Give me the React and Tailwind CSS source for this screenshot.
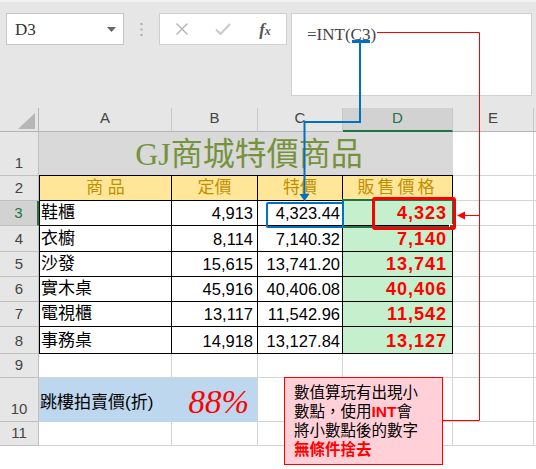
import React from 'react';

const G = 'border-r border-b border-[#d4d4d4]';
const K = 'border-r border-b border-black';
const RH = 'bg-[#e6e6e6] border-r border-b border-[#c0c0c0] flex items-end justify-center text-[15px] leading-none text-[#444] pb-[5px]';
const SERIF = "font-['Liberation_Serif','Noto_Sans_CJK_TC',serif]";

const data = [
  ['鞋櫃', '4,913', '4,323.44', '4,323'],
  ['衣櫥', '8,114', '7,140.32', '7,140'],
  ['沙發', '15,615', '13,741.20', '13,741'],
  ['實木桌', '45,916', '40,406.08', '40,406'],
  ['電視櫃', '13,117', '11,542.96', '11,542'],
  ['事務桌', '14,918', '13,127.84', '13,127'],
];

function Toolbar() {
  return (
    <div className="h-[108px] bg-[#e6e6e6] border-t-2 border-[#f2f2f2] flex items-start pt-[11px] pl-[6px]">
      <div className="w-[118px] h-[32px] bg-white border border-[#c6c6c6] flex items-center justify-between pl-[8px] pr-[7px]">
        <span className={`${SERIF} text-[17px] text-[#333] leading-none`}>D3</span>
        <svg width="9" height="5" viewBox="0 0 9 5"><path d="M0 0H9L4.5 5Z" fill="#666" /></svg>
      </div>
      <div className="w-[35px] h-[32px] flex items-center justify-center">
        <svg width="3" height="13" viewBox="0 0 3 13">
          <rect x="0.5" y="0" width="2" height="2" fill="#aaa" />
          <rect x="0.5" y="5.5" width="2" height="2" fill="#aaa" />
          <rect x="0.5" y="11" width="2" height="2" fill="#aaa" />
        </svg>
      </div>
      <div className="w-[128px] h-[32px] bg-white border border-[#d0d0d0] flex items-center">
        <div className="w-[42px] flex justify-center pl-[2px]">
          <svg width="14" height="12" viewBox="0 0 14 12"><path d="M1.5 0.5L12.5 11.5M12.5 0.5L1.5 11.5" stroke="#b4b4b4" strokeWidth="1.4" fill="none" /></svg>
        </div>
        <div className="w-[42px] flex justify-center">
          <svg width="16" height="12" viewBox="0 0 16 12"><path d="M1 6.5L5.5 11L15 1" stroke="#cccccc" strokeWidth="2.2" fill="none" /></svg>
        </div>
        <div className="w-[42px] flex justify-center">
          <span className={`${SERIF} italic font-bold text-[17px] text-[#555] leading-none`}>f<span className="text-[12px]">x</span></span>
        </div>
      </div>
      <div className="ml-[4px] w-[241px] h-[83px] bg-white border border-[#d0d0d0] pl-[15px] pt-[9px]">
        <span className={`${SERIF} text-[17px] text-[#444] leading-none`}>=INT(C3)</span>
      </div>
    </div>
  );
}

function Sheet() {
  const cells = [];
  cells.push(
    <div key="corner" className="bg-[#e6e6e6] border-r border-b border-[#b4b4b4] relative">
      <svg className="absolute left-[18px] top-[5px]" width="17" height="16" viewBox="0 0 17 16"><path d="M17 0V16H0Z" fill="#b6b6b6" /></svg>
    </div>
  );
  ['A', 'B', 'C'].forEach((l) =>
    cells.push(
      <div key={'h' + l} className="bg-[#e6e6e6] border-r border-b border-r-[#c8c8c8] border-b-[#b4b4b4] flex items-center justify-center text-[15px] text-[#444] pb-[3px]">{l}</div>
    )
  );
  cells.push(
    <div key="hD" className="bg-[#d2d2d2] border-r border-r-[#c8c8c8] border-b-2 border-b-[#217346] flex items-center justify-center text-[15px] text-[#217346] pb-[2px]">D</div>
  );
  cells.push(
    <div key="hE" className="bg-[#e6e6e6] border-r border-b border-r-[#c8c8c8] border-b-[#b4b4b4] flex items-center justify-center text-[15px] text-[#444] pb-[3px]">E</div>
  );
  cells.push(<div key="hX" className="bg-[#e6e6e6] border-b border-[#b4b4b4]" />);

  cells.push(<div key="r1" className={RH}>1</div>);
  cells.push(
    <div key="t" className={`col-span-4 bg-[#d9d9d9] border-b border-black flex items-end justify-center pb-[2px] ${SERIF} text-[32px] leading-[38px] text-[#76923c] pl-[6px]`}>GJ商城特價商品</div>
  );
  cells.push(<div key="e1" className={G} />);
  cells.push(<div key="x1" className="border-b border-[#d4d4d4]" />);

  cells.push(<div key="r2" className={RH}>2</div>);
  [['商 品', ''], ['定價', ''], ['特價', ''], ['販售價格', 'tracking-[3px]']].forEach(([t, c], i) =>
    cells.push(
      <div key={'y' + i} className={`${K} ${i === 0 ? 'border-l border-l-black' : ''} bg-[#ffe699] flex items-end justify-center text-[17px] leading-[22px] text-[#bf8f00] pb-[1px] ${c}`}>{t}</div>
    )
  );
  cells.push(<div key="e2" className={G} />);
  cells.push(<div key="x2" className="border-b border-[#d4d4d4]" />);

  data.forEach((row, ri) => {
    const n = ri + 3;
    const sel = n === 3;
    cells.push(
      <div key={'r' + n} className={sel ? 'bg-[#d2d2d2] border-r-2 border-b border-r-[#217346] border-b-[#c0c0c0] flex items-end justify-center text-[15px] leading-none text-[#217346] pb-[5px]' : RH}>{n}</div>
    );
    cells.push(<div key={'a' + n} className={`${K} border-l border-l-black flex items-end pl-[1px] text-[17px] leading-[22px] text-black pb-[1px]`}>{row[0]}</div>);
    cells.push(<div key={'b' + n} className={`${K} flex items-end justify-end pr-[4px] text-[16.5px] leading-[22px] text-black pb-[1px]`}>{row[1]}</div>);
    cells.push(<div key={'c' + n} className={`${K} flex items-end justify-end pr-[2px] text-[16.5px] leading-[22px] text-black pb-[1px]`}>{row[2]}</div>);
    cells.push(<div key={'d' + n} className={`${K} bg-[#c6efce] flex items-end justify-end pr-[5px] text-[18px] font-bold tracking-[1px] leading-[22px] text-[#ff0000] pb-[1px]`}>{row[3]}</div>);
    cells.push(<div key={'e' + n} className={G} />);
    cells.push(<div key={'x' + n} className="border-b border-[#d4d4d4]" />);
  });

  cells.push(<div key="r9" className={RH}>9</div>);
  for (let i = 0; i < 5; i++) cells.push(<div key={'n9' + i} className={G} />);
  cells.push(<div key="x9" className="border-b border-[#d4d4d4]" />);

  cells.push(<div key="r10" className={RH}>10</div>);
  cells.push(
    <div key="a10" className="col-span-2 bg-[#bdd7ee] border-r border-[#d4d4d4] flex items-end justify-between pl-[1px] pr-[8px]">
      <span className="text-[17px] leading-[22px] text-black pb-[8px]">跳樓拍賣價(折)</span>
      <span className={`${SERIF} italic text-[33px] leading-[36px] text-[#ff0000] pb-[2px]`}>88%</span>
    </div>
  );
  for (let i = 0; i < 3; i++) cells.push(<div key={'n10' + i} className={G} />);
  cells.push(<div key="x10" className="border-b border-[#d4d4d4]" />);

  cells.push(<div key="r11" className={RH}>11</div>);
  for (let i = 0; i < 5; i++) cells.push(<div key={'n11' + i} className={G} />);
  cells.push(<div key="x11" className="border-b border-[#d4d4d4]" />);

  return (
    <div className="grid grid-cols-[39px_133px_86px_85px_110px_81px_2px] grid-rows-[24px_44px_25px_25px_26px_25px_25px_25px_27px_24px_44px_24px] whitespace-nowrap">
      {cells}
    </div>
  );
}

function Overlay() {
  return (
    <>
      <div className="absolute left-[342px] top-[199px] w-[112px] h-[29px] border-2 border-[#217346]" />
      <div className="absolute left-[449px] top-[224px] w-[6px] h-[6px] bg-[#217346] border border-white" />
      <div className="absolute left-[266px] top-[202px] w-[78px] h-[26px] border-2 border-[#0070c0] rounded-[2px]" />
      <div className="absolute left-[372px] top-[197px] w-[84px] h-[33px] border-[3px] border-[#ff0000] rounded-[3px]" />
      <svg className="absolute left-0 top-0 pointer-events-none" width="536" height="469" viewBox="0 0 536 469">
        <rect x="352" y="40" width="18" height="3" fill="#0070c0" />
        <path d="M360 42V122H304.5V195" stroke="#0070c0" strokeWidth="2" fill="none" />
        <path d="M299.5 194H309.5L304.5 201Z" fill="#0070c0" />
        <path d="M377 32.5H479.5V420.5H443" stroke="#ff0000" strokeWidth="1" fill="none" />
        <path d="M479.5 215.5H463" stroke="#ff0000" strokeWidth="1" fill="none" />
        <path d="M457 215.5L465 211.5V219.5Z" fill="#ff0000" />
      </svg>
      <div className="absolute left-[284px] top-[377px] w-[159px] h-[88px] bg-[#ffd0d8] border border-[#ff0000] pl-[9px] pt-[4px] text-[15.5px] leading-[19px] text-black font-['Noto_Sans_CJK_TC',sans-serif]">
        <div className="h-[19px]">數值算玩有出現小</div>
        <div className="h-[19px]">數點，使用<span className="font-bold text-[#ff0000] font-['Liberation_Sans',sans-serif]">INT</span>會</div>
        <div className="h-[19px]">將小數點後的數字</div>
        <div className="h-[19px] font-bold text-[#ff0000]">無條件捨去</div>
      </div>
    </>
  );
}

export default function App() {
  return (
    <div className="relative w-[536px] h-[469px] overflow-hidden bg-white font-['Liberation_Sans','Noto_Sans_CJK_TC',sans-serif]">
      <Toolbar />
      <Sheet />
      <Overlay />
    </div>
  );
}
